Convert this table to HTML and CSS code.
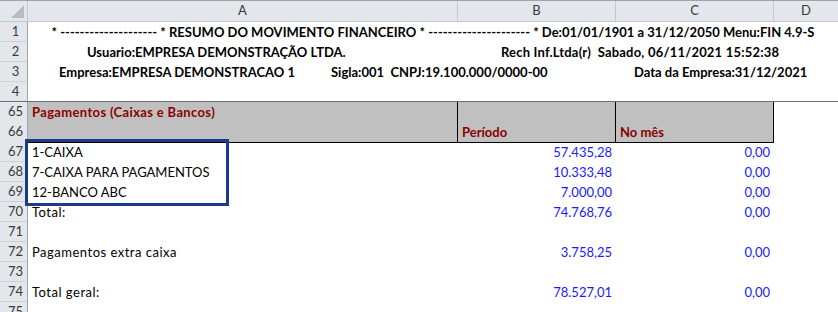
FILE: index.html
```html
<!DOCTYPE html>
<html lang="pt">
<head>
<meta charset="utf-8">
<title>Resumo do Movimento Financeiro</title>
<link rel="stylesheet" href="styles.css">
</head>
<body>
<div class="sheet">
  <div class="row colhead">
    <div class="corner"><span class="tri"></span></div>
    <div class="ch">A</div>
    <div class="ch">B</div>
    <div class="ch">C</div>
    <div class="ch">D</div>
  </div>

  <div class="row">
    <div class="rh">1</div>
    <div class="wide head center">* -------------------- * RESUMO DO MOVIMENTO FINANCEIRO * --------------------- * De:01/01/1901 a 31/12/2050 Menu:FIN 4.9-S</div>
  </div>
  <div class="row">
    <div class="rh">2</div>
    <div class="wide head"><span class="slot s2a">Usuario:EMPRESA DEMONSTRAÇÃO LTDA.</span><span class="slot s2b">Rech Inf.Ltda(r)  Sabado, 06/11/2021 15:52:38</span></div>
  </div>
  <div class="row">
    <div class="rh">3</div>
    <div class="wide head"><span class="slot s3a">Empresa:EMPRESA DEMONSTRACAO 1</span><span class="slot s3b">Sigla:001  CNPJ:19.100.000/0000-00</span><span class="slot s3c">Data da Empresa:31/12/2021</span></div>
  </div>
  <div class="row freeze">
    <div class="rh">4</div>
    <div class="wide"></div>
  </div>

  <div class="row">
    <div class="rh">65</div>
    <div class="c ca gray title lc-b">Pagamentos (Caixas e Bancos)</div>
    <div class="c cb gray"></div>
    <div class="c cc gray"></div>
    <div class="c cd"></div>
  </div>
  <div class="row">
    <div class="rh">66</div>
    <div class="c ca gray"></div>
    <div class="c cb gray title">Período</div>
    <div class="c cc gray title">No mês</div>
    <div class="c cd"></div>
  </div>

  <div class="row">
    <div class="rh">67</div>
    <div class="c ca">1-CAIXA</div>
    <div class="c cb num">57.435,28</div>
    <div class="c cc num">0,00</div>
    <div class="c cd"></div>
  </div>
  <div class="row">
    <div class="rh">68</div>
    <div class="c ca">7-CAIXA PARA PAGAMENTOS</div>
    <div class="c cb num">10.333,48</div>
    <div class="c cc num">0,00</div>
    <div class="c cd"></div>
  </div>
  <div class="row">
    <div class="rh">69</div>
    <div class="c ca">12-BANCO ABC</div>
    <div class="c cb num">7.000,00</div>
    <div class="c cc num">0,00</div>
    <div class="c cd"></div>
  </div>
  <div class="row">
    <div class="rh">70</div>
    <div class="c ca lc">Total:</div>
    <div class="c cb num">74.768,76</div>
    <div class="c cc num">0,00</div>
    <div class="c cd"></div>
  </div>
  <div class="row">
    <div class="rh">71</div>
    <div class="c ca"></div>
    <div class="c cb"></div>
    <div class="c cc"></div>
    <div class="c cd"></div>
  </div>
  <div class="row">
    <div class="rh">72</div>
    <div class="c ca lc">Pagamentos extra caixa</div>
    <div class="c cb num">3.758,25</div>
    <div class="c cc num">0,00</div>
    <div class="c cd"></div>
  </div>
  <div class="row">
    <div class="rh">73</div>
    <div class="c ca"></div>
    <div class="c cb"></div>
    <div class="c cc"></div>
    <div class="c cd"></div>
  </div>
  <div class="row">
    <div class="rh">74</div>
    <div class="c ca lc">Total geral:</div>
    <div class="c cb num">78.527,01</div>
    <div class="c cc num">0,00</div>
    <div class="c cd"></div>
  </div>
  <div class="row">
    <div class="rh">75</div>
    <div class="c ca"></div>
    <div class="c cb"></div>
    <div class="c cc"></div>
    <div class="c cd"></div>
  </div>

  <div class="selection-box"></div>
</div>
</body>
</html>
```

FILE: styles.css
```css
* {
  box-sizing: border-box;
}

html, body {
  margin: 0;
  padding: 0;
  background: #ffffff;
  overflow: hidden;
}

.sheet {
  position: relative;
  width: 838px;
  height: 312px;
  overflow: hidden;
  font-family: Lato, "Open Sans", sans-serif;
  font-size: 13px;
  color: #000000;
}

.row {
  display: grid;
  grid-template-columns: 28px 430px 158px 158px 64px;
  height: 20px;
  line-height: 20px;
}

/* column header */
.colhead {
  height: 22px;
  line-height: 19px;
  border-top: 1px solid #9da3aa;
  background: #e3e6ea;
}

.corner {
  position: relative;
  border-right: 1px solid #c3c8ce;
  border-bottom: 1px solid #c3c8ce;
  background: #e3e6ea;
}

.tri {
  position: absolute;
  right: 3px;
  bottom: 3px;
  width: 0;
  height: 0;
  border-left: 13px solid transparent;
  border-bottom: 13px solid #b7bcc2;
}

.ch {
  text-align: center;
  color: #3a3a3a;
  border-right: 1px solid #c3c8ce;
  border-bottom: 1px solid #c3c8ce;
  font-size: 13px;
}

.ch:last-child {
  border-right: none;
}

/* row header */
.rh {
  background: #e3e6ea;
  border-right: 1px solid #9fa5ac;
  border-bottom: 1px solid #cdd1d6;
  color: #3a3a3a;
  text-align: center;
  padding-left: 4px;
  line-height: 19px;
}

.wide {
  grid-column: 2 / 6;
  white-space: nowrap;
}

.head {
  font-weight: 700;
  font-size: 13px;
}

.center {
  text-align: center;
  white-space: pre;
}

.slot {
  display: inline-block;
  white-space: pre;
}

.s2a {
  width: 473px;
  padding-left: 59px;
}

.s2b {
  letter-spacing: 0.2px;
}

.s3a {
  width: 303px;
  padding-left: 31px;
}

.s3b {
  width: 303px;
}

.freeze {
  border-bottom: 1px solid #6f6f6f;
}

.freeze .rh {
  border-bottom: none;
}

/* cells */
.c {
  white-space: pre;
}

.ca {
  padding-left: 4px;
}

.lc {
  letter-spacing: 0.5px;
}

.lc-b {
  letter-spacing: 0.35px;
}

.gray {
  background: #c0c0c0;
  border-bottom: 1px solid #000000;
  border-right: 1px solid #000000;
}

.title {
  color: #8b0000;
  font-weight: 700;
  padding-left: 4px;
}

.num {
  text-align: right;
  padding-right: 4px;
  color: #1a1aff;
}

.selection-box {
  position: absolute;
  left: 25px;
  top: 139px;
  width: 204px;
  height: 67px;
  border: 3px solid #1b3a8c;
}
```
